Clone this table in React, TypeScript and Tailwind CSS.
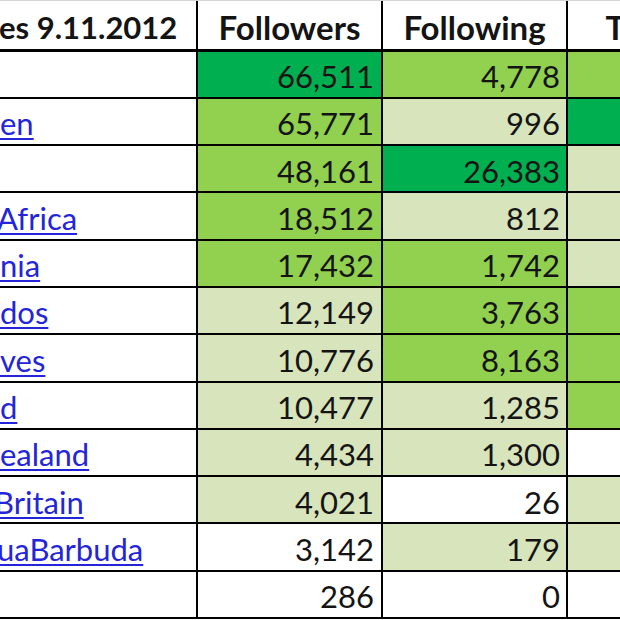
import React from "react";

type C = "d" | "m" | "l" | "w";
const bg: Record<C, string> = {
  d: "bg-[#00b050]",
  m: "bg-[#92d050]",
  l: "bg-[#d8e4bc]",
  w: "bg-white",
};

const rows: { name: string; shift: string; f: string; fc: C; g: string; gc: C; tc: C }[] = [
  { name: "", shift: "", f: "66,511", fc: "d", g: "4,778", gc: "m", tc: "m" },
  { name: "en", shift: "", f: "65,771", fc: "m", g: "996", gc: "l", tc: "d" },
  { name: "", shift: "", f: "48,161", fc: "m", g: "26,383", gc: "d", tc: "l" },
  { name: "Africa", shift: "-ml-[3px]", f: "18,512", fc: "m", g: "812", gc: "l", tc: "l" },
  { name: "nia", shift: "", f: "17,432", fc: "m", g: "1,742", gc: "m", tc: "l" },
  { name: "dos", shift: "", f: "12,149", fc: "l", g: "3,763", gc: "m", tc: "m" },
  { name: "ves", shift: "", f: "10,776", fc: "l", g: "8,163", gc: "m", tc: "m" },
  { name: "d", shift: "", f: "10,477", fc: "l", g: "1,285", gc: "l", tc: "m" },
  { name: "ealand", shift: "", f: "4,434", fc: "l", g: "1,300", gc: "l", tc: "w" },
  { name: "Britain", shift: "-ml-[6px]", f: "4,021", fc: "l", g: "26", gc: "w", tc: "l" },
  { name: "uaBarbuda", shift: "-ml-[3px]", f: "3,142", fc: "w", g: "179", gc: "l", tc: "l" },
  { name: "", shift: "", f: "286", fc: "w", g: "0", gc: "w", tc: "w" },
];

export default function App() {
  return (
    <div
      className="w-[620px] h-[620px] overflow-hidden bg-white text-[#141414]"
      style={{ fontFamily: "Lato, 'Noto Sans', sans-serif" }}
    >
      <div className="border-t border-[#d4d4d4] w-[760px]">
        <div className="grid grid-cols-[196px_183px_183px_180px] grid-rows-[48.5px_repeat(12,45.3px)] gap-x-[2px] gap-y-[2px] bg-black pb-[2px]">
          <div className="bg-white mb-[1px] flex items-center pt-[5px] text-[31px] font-bold whitespace-nowrap overflow-hidden">
            <span className="-ml-[1px]">es 9.11.2012</span>
          </div>
          <div className="bg-white mb-[1px] flex items-center justify-center pt-[5px] text-[33px] font-bold">Followers</div>
          <div className="bg-white mb-[1px] flex items-center justify-center pt-[5px] text-[33px] font-bold">Following</div>
          <div className="bg-white mb-[1px] flex items-center justify-center pt-[5px] text-[33px] font-bold">Tweets</div>
          {rows.map((r, i) => (
            <React.Fragment key={i}>
              <div className="bg-white flex items-center pt-[4px] overflow-hidden whitespace-nowrap text-[31px]">
                {r.name && (
                  <a
                    href="#"
                    className={`${r.shift} text-[#2424d8] underline decoration-2 underline-offset-[3px]`}
                  >
                    {r.name}
                  </a>
                )}
              </div>
              <div className={`${bg[r.fc]} flex items-center justify-end pt-[4px] pr-[7px] text-[31px]`}>{r.f}</div>
              <div className={`${bg[r.gc]} flex items-center justify-end pt-[4px] pr-[6px] text-[31px]`}>{r.g}</div>
              <div className={`${bg[r.tc]}`} />
            </React.Fragment>
          ))}
        </div>
      </div>
    </div>
  );
}
